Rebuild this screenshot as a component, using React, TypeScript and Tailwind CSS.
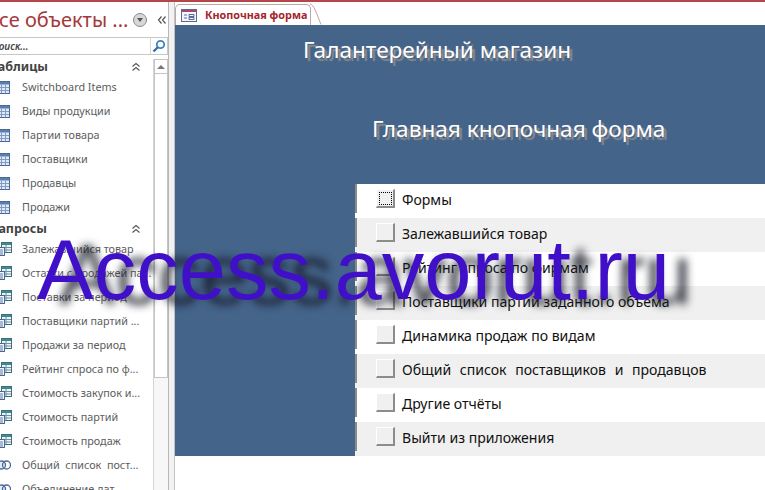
import React from "react";

const SIDE = '"Noto Sans", "Open Sans", sans-serif';

function TableIcon() {
  return (
    <svg width="13" height="13" viewBox="0 0 13 13" className="shrink-0">
      <rect x="0.5" y="0.5" width="12" height="12" fill="#dfe8f4" stroke="#4a6a96" />
      <rect x="1" y="1" width="11" height="2.5" fill="#5b7fae" />
      <path d="M1 6.5H12M1 9.5H12M4.5 3.5V12M8.5 3.5V12" stroke="#7f9cc4" strokeWidth="1" />
    </svg>
  );
}

function QueryIcon() {
  return (
    <svg width="15" height="14" viewBox="0 0 15 14" className="shrink-0">
      <rect x="4.5" y="0.5" width="10" height="10" fill="#eef3f8" stroke="#3f6f78" />
      <rect x="5" y="1" width="9" height="2" fill="#3f8a8c" />
      <path d="M5 5.5H14M5 8H14M9 3V10" stroke="#6f93a8" />
      <rect x="0.5" y="5.5" width="7" height="8" fill="#f4f6fa" stroke="#4a6a96" />
      <path d="M2 8H6M2 10H6M2 12H6" stroke="#5b7fae" />
    </svg>
  );
}

function UnionIcon() {
  return (
    <svg width="14" height="12" viewBox="0 0 14 12" className="shrink-0">
      <circle cx="4.5" cy="6" r="4" fill="#e4ecf6" stroke="#4a6a96" strokeWidth="1.3" />
      <circle cx="9.5" cy="6" r="4" fill="none" stroke="#4a6a96" strokeWidth="1.3" />
    </svg>
  );
}

function Chevrons() {
  return (
    <svg width="10" height="10" viewBox="0 0 10 10" className="shrink-0">
      <path d="M1.5 4.5L5 1.5L8.5 4.5M1.5 8.5L5 5.5L8.5 8.5" fill="none" stroke="#555" strokeWidth="1.1" />
    </svg>
  );
}

function NavRow({ label, kind }: { label: string; kind: "t" | "q" | "u" }) {
  return (
    <div className="flex h-6 items-center">
      <div className="flex w-[22px] shrink-0 items-center">
        <div className="-ml-[3px]">
          {kind === "t" ? <TableIcon /> : kind === "q" ? <QueryIcon /> : <UnionIcon />}
        </div>
      </div>
      <span className="whitespace-pre text-[10.8px] text-[#5c5c5c]">{label}</span>
    </div>
  );
}

function GroupHead({ label }: { label: string }) {
  return (
    <div className="flex h-[18px] items-center justify-between pr-[12px]">
      <span className="text-[12.5px] font-bold text-[#444]">{label}</span>
      <Chevrons />
    </div>
  );
}

function FormRow({ label, odd, focus, spaced }: { label: string; odd: boolean; focus?: boolean; spaced?: boolean }) {
  return (
    <div className={`flex h-[34px] items-start ${odd ? "bg-white" : "bg-[#f0f0f0]"}`}>
      <div className="h-[29px] w-[2px] shrink-0 bg-[#8a8a8a]" />
      <div className="mt-[5px] ml-[19px] flex h-[19px] w-[19px] shrink-0 items-center justify-center border-t border-l border-t-white border-l-white border-r-2 border-b-2 border-r-[#8c8c8c] border-b-[#8c8c8c] bg-[#f0f0f0]">
        {focus && <div className="h-[13px] w-[13px] border border-dotted border-black" />}
      </div>
      <span
        className={`mt-[6px] ml-[7px] whitespace-nowrap text-[14.05px] leading-[19px] text-[#111] ${spaced ? "[word-spacing:5px]" : ""}`}
        style={{ fontFamily: SIDE }}
      >
        {label}
      </span>
    </div>
  );
}

export default function App() {
  return (
    <div className="relative flex h-[490px] w-[765px] flex-col overflow-hidden bg-white" style={{ fontFamily: SIDE }}>
      <div className="h-[2px] shrink-0 bg-[#b5474a]" />
      <div className="flex min-h-0 flex-1">
        {/* nav pane */}
        <aside className="flex w-[169px] shrink-0 flex-col overflow-hidden border-r border-[#b8b8b8] bg-white">
          <div className="flex h-[35px] shrink-0 items-center">
            <span className="-ml-[14px] mt-[1px] whitespace-nowrap text-[20px] leading-[30px] text-[#a5373a]">Все объекты ...</span>
            <div className="ml-[5px] flex h-[14px] w-[14px] shrink-0 items-center justify-center rounded-full border border-[#8a8a8a] bg-[#d8d8d8]">
              <div className="h-0 w-0 border-x-[3.5px] border-t-[4px] border-x-transparent border-t-[#555]" />
            </div>
            <svg width="10" height="10" viewBox="0 0 10 10" className="ml-[10px] shrink-0">
              <path d="M4.5 1.5L1.5 5L4.5 8.5M8.5 1.5L5.5 5L8.5 8.5" fill="none" stroke="#555" strokeWidth="1.2" />
            </svg>
          </div>
          <div className="flex h-[18px] shrink-0 items-center border border-l-0 border-[#c8c8c8]">
            <span className="-ml-[8px] flex-1 text-[10px] font-semibold italic text-[#444]">Поиск...</span>
            <div className="flex h-full w-[17px] items-center justify-center border-l border-[#d8d8d8]">
              <svg width="14" height="14" viewBox="0 0 14 14">
                <circle cx="8.5" cy="5.5" r="3.7" fill="none" stroke="#3f83bf" strokeWidth="1.8" />
                <path d="M5.8 8.2L1.5 12.5" stroke="#2f6da8" strokeWidth="2.2" />
              </svg>
            </div>
          </div>
          <div className="flex min-h-0 flex-1 pt-[4px]">
            <div className="w-[153px] shrink-0 overflow-hidden">
              <div className="-ml-[8px] pl-[8px]">
                <div className="-ml-[9px] -mt-[1px]">
                  <GroupHead label="Таблицы" />
                </div>
                <div className="-mt-[1px]">
                  {["Switchboard Items", "Виды продукции", "Партии товара", "Поставщики", "Продавцы", "Продажи"].map((l) => (
                    <NavRow key={l} label={l} kind="t" />
                  ))}
                </div>
                <div className="-ml-[9px] pt-[1px]">
                  <GroupHead label="Запросы" />
                </div>
                <div className="-mt-[1px]">
                  {[
                    "Залежавшийся товар",
                    "Остатки с продажей па...",
                    "Поставки за период",
                    "Поставщики партий ...",
                    "Продажи за период",
                    "Рейтинг спроса по ф...",
                    "Стоимость закупок и...",
                    "Стоимость партий",
                    "Стоимость продаж",
                  ].map((l) => (
                    <NavRow key={l} label={l} kind="q" />
                  ))}
                  <NavRow label="Общий  список  пост..." kind="u" />
                  <NavRow label="Объединение дат" kind="u" />
                </div>
              </div>
            </div>
            <div className="flex w-[15px] shrink-0 flex-col border-l border-[#d4d4d4]">
              <div className="flex h-[15px] shrink-0 items-center justify-center border border-[#c4c4c4] bg-white">
                <div className="h-0 w-0 border-x-[4px] border-b-[4px] border-x-transparent border-b-[#777]" />
              </div>
              <div className="h-[304px] shrink-0 border border-t-0 border-[#c4c4c4] bg-white" />
              <div className="flex-1 bg-[#f7f7f7]" />
            </div>
          </div>
        </aside>
        <div className="w-[6px] shrink-0 border-r border-[#c4c4c4] bg-[#f2f2f2]" />
        {/* document */}
        <main className="flex min-w-0 flex-1 flex-col">
          <div className="flex h-[23px] shrink-0 items-end bg-white">
            <div className="flex h-[21px] w-[136px] items-center rounded-t-[5px] border border-b-0 border-[#b9a9a0] bg-white pl-[5px]">
              <svg width="16" height="13" viewBox="0 0 16 13" className="shrink-0">
                <rect x="0.5" y="0.5" width="15" height="12" fill="#f4f6fb" stroke="#5a6a92" />
                <rect x="1" y="1" width="14" height="2" fill="#a7486a" />
                <path d="M3 6H6M3 9H6M8 5.5H13V7.5H8ZM8 8.5H13V10.5H8Z" fill="none" stroke="#4a5a86" strokeWidth="0.9" />
              </svg>
              <span className="ml-[8px] whitespace-nowrap text-[10.8px] font-bold text-[#a4262c]">Кнопочная форма</span>
            </div>
            <svg width="12" height="23" viewBox="0 0 12 23" className="-ml-px shrink-0">
              <path d="M0 2C4 3 6 10 11 22.5" fill="none" stroke="#b9a9a0" />
            </svg>
          </div>
          <div className="w-[590px] shrink-0 bg-[#45648a]">
            <div className="h-[159px] overflow-hidden text-white">
              <div className="ml-[128px] pt-[10px] text-[22.6px] leading-[30px] [text-shadow:3px_3px_1px_#8a8a8a]">Галантерейный магазин</div>
              <div className="ml-[197px] pt-[49px] text-[22.6px] leading-[30px] [text-shadow:3px_3px_1px_#8a8a8a]">Главная кнопочная форма</div>
            </div>
            <div className="ml-[180px]">
              <FormRow label="Формы" odd focus />
              <FormRow label="Залежавшийся товар" odd={false} />
              <FormRow label="Рейтинг спроса по фирмам" odd />
              <FormRow label="Поставщики партий заданного объема" odd={false} />
              <FormRow label="Динамика продаж по видам" odd />
              <FormRow label="Общий список поставщиков и продавцов" odd={false} spaced />
              <FormRow label="Другие отчёты" odd />
              <FormRow label="Выйти из приложения" odd={false} />
            </div>
          </div>
        </main>
      </div>
      <div
        className="absolute left-[37px] top-[221px] whitespace-nowrap text-[85px] leading-[98px] text-[#4010c8] [text-shadow:22px_5px_8px_rgba(20,22,35,0.85)]"
        style={{ fontFamily: '"Liberation Sans", Arial, sans-serif' }}
      >
        Access.avorut.ru
      </div>
    </div>
  );
}
